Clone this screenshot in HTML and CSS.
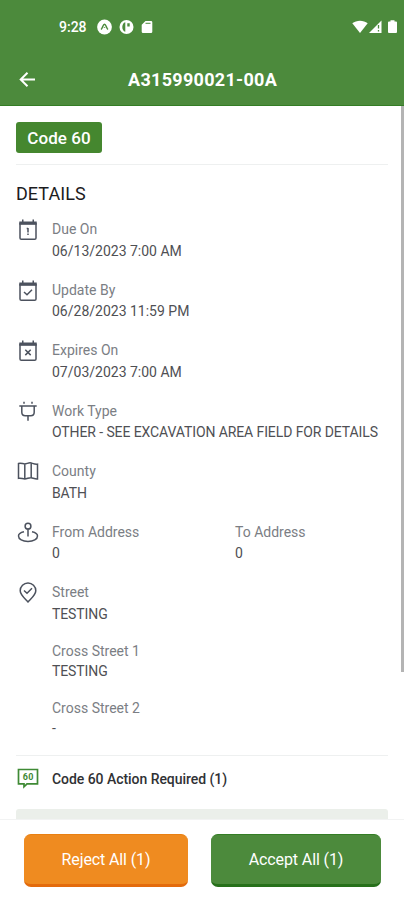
FILE: index.html
```html
<!DOCTYPE html>
<html lang="en">
<head>
<meta charset="utf-8">
<title>A315990021-00A</title>
<link rel="stylesheet" href="styles.css">
</head>
<body>
<div class="app">
  <header class="header">
    <div class="status">
      <span class="time">9:28</span>
      <svg class="s-icon" width="15" height="16" viewBox="0 0 15 16"><circle cx="7.5" cy="8" r="7.4" fill="#fff"/><path d="M4 10.5C5.5 9.5 6 5.2 7.5 5.2S9.500 9.500 11 10.500M7.500 8.200v.8" fill="none" stroke="#4c8a3c" stroke-width="1.500"/></svg>
      <svg class="s-icon" width="15" height="16" viewBox="0 0 15 16"><circle cx="7.500" cy="8" r="7" fill="#fff"/><path d="M6.300 3.200C2.300 4 2.300 12 6.300 12.800zM8.300 4.300h2.400v3.200H8.300z" fill="#4c8a3c"/></svg>
      <svg class="s-icon" width="12" height="16" viewBox="0 0 12 16"><path d="M4.500 2H10a1.300 1.300 0 0 1 1.300 1.300v9.400A1.300 1.300 0 0 1 10 14H2a1.300 1.300 0 0 1-1.300-1.300V5.800z" fill="#fff"/><path d="M4.500 4.300h5" stroke="#4c8a3c" stroke-width="1"/></svg>
      <span class="spacer"></span>
      <svg width="16" height="14" viewBox="0 0 16 14"><path d="M.3 3.200C4.500-.2 11.500-.2 15.700 3.200L8 13z" fill="#fff"/></svg>
      <svg class="signal" width="13" height="14" viewBox="0 0 13 14"><path d="M12.500.5V13H0z" fill="#fff"/><path d="M9.500 5v3.500M9.500 10v1.500" stroke="#4c8a3c" stroke-width="1.300"/></svg>
      <svg class="battery" width="9" height="14" viewBox="0 0 9 14"><path d="M2.500.3h4v1.200H8A1 1 0 0 1 9 2.500V12a1 1 0 0 1-1 1H1a1 1 0 0 1-1-1V2.500a1 1 0 0 1 1-1h1.500z" fill="#fff"/></svg>
    </div>
    <div class="titlebar">
      <svg class="back" width="18" height="18" viewBox="0 0 18 18" fill="none" stroke="#fff" stroke-width="2"><path d="M17 8.500H3M9.500 1.700L2.700 8.500l6.800 6.800"/></svg>
      <h1 class="title">A315990021-00A</h1>
    </div>
  </header>

  <main class="content">
    <div class="badge-row"><span class="badge">Code 60</span></div>
    <h2 class="heading">DETAILS</h2>

    <section class="row">
      <svg class="icon" viewBox="0 0 22 22"><path d="M3 4.500h16V19a1.300 1.300 0 0 1-1.300 1.300H4.300A1.300 1.300 0 0 1 3 19z"/><path class="solid" d="M2.300 2.500H5V.500h1.500v2h9v-2H17v2h2.700v3.200H2.300z"/><path d="M11 9v4.500M11 14.500v1.500M9.700 9.600h1.300"/></svg>
      <div class="field"><div class="label">Due On</div><div class="value">06/13/2023 7:00 AM</div></div>
    </section>
    <section class="row">
      <svg class="icon" viewBox="0 0 22 22"><path d="M3 4.500h16V19a1.300 1.300 0 0 1-1.300 1.300H4.300A1.300 1.300 0 0 1 3 19z"/><path class="solid" d="M2.300 2.500H5V.500h1.500v2h9v-2H17v2h2.700v3.200H2.300z"/><path d="M7 12l3 2.700 5-5"/></svg>
      <div class="field"><div class="label">Update By</div><div class="value">06/28/2023 11:59 PM</div></div>
    </section>
    <section class="row">
      <svg class="icon" viewBox="0 0 22 22"><path d="M3 4.500h16V19a1.300 1.300 0 0 1-1.300 1.300H4.300A1.300 1.300 0 0 1 3 19z"/><path class="solid" d="M2.300 2.500H5V.500h1.500v2h9v-2H17v2h2.700v3.200H2.300z"/><path d="M8.300 9.700l5.400 5.400M13.700 9.700l-5.400 5.400"/></svg>
      <div class="field"><div class="label">Expires On</div><div class="value">07/03/2023 7:00 AM</div></div>
    </section>
    <section class="row">
      <svg class="icon" viewBox="0 0 22 22"><path d="M2.300 4.900h17.400M4.800 4.900v6.300c0 2 1.300 3.500 3.500 3.500h5.400c2.200 0 3.500-1.500 3.500-3.500V4.900M11 14.700v5.100M7 .8v2M15 .8v2"/></svg>
      <div class="field"><div class="label">Work Type</div><div class="value caps">OTHER - SEE EXCAVATION AREA FIELD FOR DETAILS</div></div>
    </section>
    <section class="row">
      <svg class="icon" viewBox="0 0 22 22"><path d="M1.500 2.500c2.300-.8 4.300.4 6.300.4S12 1.300 14.200 2s4 1.600 6.300 1.200V18c-2.300.3-4.300-.9-6.300-1.300s-4.200 1.200-6.400 1.200-4-1.200-6.300-.6zM7.800 3V18M14.200 2v14.500"/></svg>
      <div class="field"><div class="label">County</div><div class="value caps">BATH</div></div>
    </section>
    <section class="row">
      <svg class="icon" viewBox="0 0 22 22"><circle cx="11" cy="4.200" r="2.900"/><path d="M11 7.100v7.400M7 9.700c-3.300.7-5.500 2.200-5.500 4.200 0 3.200 4 5.600 9.500 5.600s9.500-2.400 9.500-5.600c0-2-2.200-3.500-5.500-4.200"/></svg>
      <div class="field pair">
        <div><div class="label">From Address</div><div class="value">0</div></div>
        <div><div class="label">To Address</div><div class="value">0</div></div>
      </div>
    </section>
    <section class="row">
      <svg class="icon" viewBox="0 0 22 22"><path d="M11 20C7.500 16.200 3.200 12.800 3.200 8.800a7.800 7.800 0 0 1 15.600 0c0 4-4.300 7.400-7.800 11.200z"/><path d="M7 8.500l3 2.800 5-5"/></svg>
      <div class="field"><div class="label">Street</div><div class="value caps">TESTING</div></div>
    </section>
    <section class="sub"><div class="label">Cross Street 1</div><div class="value caps">TESTING</div></section>
    <section class="sub"><div class="label">Cross Street 2</div><div class="value">-</div></section>

    <section class="action">
      <svg class="action-icon" viewBox="0 0 22 22"><path d="M1.500 1.500h19v14.300H10L7 18.800v-3H1.500z" fill="none" stroke="#3f8a35" stroke-width="1.700"/><text x="11.300" y="12" text-anchor="middle">60</text></svg>
      <span class="action-text">Code 60 Action Required (1)</span>
    </section>
    <div class="panel"></div>
    <div class="scrollbar"></div>
  </main>

  <footer class="footer">
    <button class="btn reject">Reject All (1)</button>
    <button class="btn accept">Accept All (1)</button>
  </footer>
</div>
</body>
</html>
```
FILE: styles.css
```css
* { box-sizing: border-box; }
body { margin: 0; background: #fff; font-family: Roboto, sans-serif; }
.app { width: 404px; height: 900px; display: flex; flex-direction: column; overflow: hidden; }
svg { display: block; flex: none; }

.header { height: 106px; flex: none; background: #4c8a3c; border-bottom: 1px solid #347d25; color: #fff; }
.status { height: 53px; padding: 0 7px 0 59px; display: flex; align-items: center; }
.time { width: 37.500px; font-size: 14px; font-weight: 500; }
.s-icon { margin-right: 7px; }
.spacer { flex: 1; }
.signal { margin-left: 1px; }
.battery { margin-left: 6px; }
.titlebar { height: 53px; padding-left: 18px; display: flex; align-items: center; }
.title { margin: 0 0 0 92px; font-size: 18px; line-height: 24px; font-weight: 700; letter-spacing: .3px; white-space: nowrap; }

.content { position: relative; height: 713px; flex: none; padding: 16px 16px 0; overflow: hidden; }
.badge-row { height: 43px; border-bottom: 1px solid #eef0f0; }
.badge { display: block; width: 86px; height: 31px; border-radius: 3px; background: #45872f; color: #fff; font-size: 17px; line-height: 33px; font-weight: 500; letter-spacing: .05px; text-align: center; }
.heading { margin: 17px 0 14px; height: 23px; font-size: 18px; line-height: 23px; font-weight: 400; letter-spacing: .05px; color: #1c1c1e; }
.row { height: 60.500px; display: flex; }
.icon { width: 22px; height: 22px; margin: 0 13px 0 1px; fill: none; stroke: #4c525e; stroke-width: 1.500; }
.icon .solid { fill: #4c525e; stroke: none; }
.field { flex: 1; }
.pair { display: grid; grid-template-columns: 183px 1fr; }
.label, .value { height: 21.500px; line-height: 21.500px; font-size: 14px; letter-spacing: 0; white-space: nowrap; }
.label { color: #7b7e84; }
.value { color: #4f5054; }
.caps { letter-spacing: -.1px; }
.sub { height: 57px; margin-left: 36px; }
.sub .label, .sub .value { height: 20px; line-height: 20px; }
.row + .sub { margin-top: -1.500px; }
.action { height: 54px; border-top: 1px solid #eef0f0; padding-top: 12px; display: flex; }
.action-icon { width: 22px; height: 22px; margin: 0 13px 0 1px; }
.action-icon text { font-size: 9px; font-weight: 700; fill: #3f8a35; letter-spacing: .5px; }
.action-text { font-size: 14px; line-height: 23px; font-weight: 500; letter-spacing: -.05px; color: #303134; }
.panel { height: 10px; background: #ebefea; border-radius: 3px 3px 0 0; }
.scrollbar { position: absolute; top: 0; right: 0; width: 3px; height: 566px; background: #b4b4b4; }

.footer { height: 81px; flex: none; border-top: 1px solid #f2f3f3; padding: 14px 23px 0 24px; display: flex; justify-content: space-between; }
.btn { height: 53px; border: 0; border-radius: 7px; padding: 0; font: 400 16px/50px Roboto, sans-serif; letter-spacing: -.12px; color: #fff; }
.reject { width: 164px; background: #ef8b20; border-top: 1px solid #e98012; border-bottom: 3px solid #e36b0c; }
.accept { width: 170px; background: #4c8a3c; border-top: 1px solid #347d25; border-bottom: 3px solid #27701b; }
```
